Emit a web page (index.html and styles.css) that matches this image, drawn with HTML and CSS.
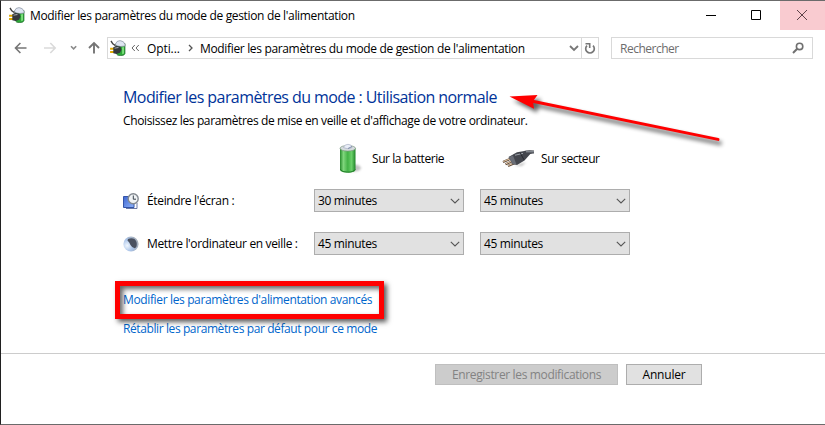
FILE: index.html
```
<!doctype html>
<html lang="fr">
<head>
    <meta charset="UTF-8">
    <meta name="viewport" content="width=device-width, initial-scale=1.0">
    <title>Modifier les paramètres du mode de gestion de l'alimentation</title>
    <link rel="stylesheet" href="styles.css">
</head>
<body>

<svg class="defs" width="0" height="0">
    <defs>
        <linearGradient id="green" x1="0" x2="1">
            <stop offset="0" stop-color="#278b2c"/>
            <stop offset=".22" stop-color="#80d67d"/>
            <stop offset=".5" stop-color="#43b246"/>
            <stop offset=".75" stop-color="#6bd06a"/>
            <stop offset="1" stop-color="#1d8427"/>
        </linearGradient>
        <linearGradient id="screen" x1="0" x2="1" y1="0" y2="1">
            <stop offset="0" stop-color="#3d65d0"/>
            <stop offset="1" stop-color="#8fb4fa"/>
        </linearGradient>
        <radialGradient id="moon" cx=".25" cy=".6" r=".8">
            <stop offset="0" stop-color="#f0f7ff"/>
            <stop offset=".5" stop-color="#a9c3e8"/>
            <stop offset="1" stop-color="#a3a8ae"/>
        </radialGradient>
        <filter id="soft" x="-50%" y="-50%" width="200%" height="200%">
            <feGaussianBlur stdDeviation="1.3"/>
        </filter>
        <filter id="shade" x="-20%" y="-50%" width="140%" height="200%">
            <feGaussianBlur stdDeviation="2.2"/>
        </filter>
        <symbol id="power" viewBox="0 0 16 16">
            <path d="M6 3.5 H15 V13.5 Q14.5 15.7 10.5 15.7 Q7 15.5 6.5 14Z" fill="#2ca737" stroke="#2c6e38" stroke-width=".7"/>
            <path d="M5.5 4 Q6.5 .6 10 .6 Q14 .8 15 4.500 V6 Q10 7.300 6 5.500Z" fill="#dfe5f2" stroke="#7b8492" stroke-width=".6"/>
            <path d="M12 7.500 L14 7 V13.500 L12.200 14.200Z" fill="#7be07b"/>
            <path d="M1 1 L2.800 3.800 L5.500 5.600" fill="none" stroke="#444" stroke-width="1.4"/>
            <path d="M.1 8.700 H4 M.1 12 H4" stroke="#dda800" stroke-width="1.9"/>
            <path d="M3.300 7.300 L6.500 5.800 L10.500 6.800 L11.500 9.800 L10 12.700 L6.500 14 L3.300 13.200Z" fill="#34383b"/>
            <path d="M4.500 8.200 L8.500 7.400" stroke="#999da1" stroke-width="1.1"/>
        </symbol>
        <symbol id="chevron" viewBox="0 0 10 6">
            <path d="M.8 .8 L5 5 L9.2 .8" fill="none" stroke="#555" stroke-width="1.1"/>
        </symbol>
    </defs>
</svg>

<div class="window">
    <div class="titlebar">
        <svg class="app-icon" width="16" height="16"><use href="#power"/></svg>
        <div class="title">Modifier les paramètres du mode de gestion de l'alimentation</div>
        <svg class="control" width="45" height="29" viewBox="0 0 45 29">
            <path d="M16 14.5 H26" stroke="#000"/>
        </svg>
        <svg class="control" width="45" height="29" viewBox="0 0 45 29">
            <path d="M16.5 9.5 H25.5 V18.5 H16.5Z" fill="none" stroke="#000"/>
        </svg>
        <svg class="control close" width="45" height="29" viewBox="0 0 45 29">
            <path d="M17 9 L27 19 M27 9 L17 19" stroke="#5d4348"/>
        </svg>
    </div>

    <div class="navbar">
        <svg class="arrows" width="106" height="22" viewBox="0 0 106 22">
            <g fill="none" stroke="#757575" stroke-width="1.6">
                <path d="M25.5 11 H14.6 M19.4 6 L14.5 11 L19.4 16"/>
                <path d="M43 11 H54 M49.3 6 L54.2 11 L49.3 16" stroke="#dadada"/>
                <path d="M70 9.2 L72.6 11.8 L75.2 9.2" stroke="#8a8a8a"/>
                <path d="M93 16.5 V6.2 M88 11 L93 6 L98 11" stroke-width="1.9"/>
            </g>
        </svg>
        <div class="address">
            <svg class="address-icon" width="16" height="16"><use href="#power"/></svg>
            <svg class="back" width="9" height="8" viewBox="0 0 9 8">
                <path d="M3.8 1 L1 4 L3.8 7 M7.8 1 L5 4 L7.8 7" fill="none" stroke="#666"/>
            </svg>
            <div class="crumb crumb-short">Opti...</div>
            <svg class="sep" width="5" height="8" viewBox="0 0 5 8">
                <path d="M1 1 L4 4 L1 7" fill="none" stroke="#555" stroke-width="1.3"/>
            </svg>
            <div class="crumb crumb-long">Modifier les paramètres du mode de gestion de l'alimentation</div>
            <svg class="drop" width="10" height="7" viewBox="0 0 10 7">
                <path d="M1 1 L5 5 L9 1" fill="none" stroke="#777" stroke-width="1.8"/>
            </svg>
            <div class="refresh">
                <svg width="12" height="13" viewBox="0 0 12 13">
                    <path d="M3 3.6 A4.3 4.3 0 1 0 9 3.600" fill="none" stroke="#777" stroke-width="1.7"/>
                    <path d="M1.500 1.800 H5.7 V6" fill="none" stroke="#777" stroke-width="1.6"/>
                </svg>
            </div>
        </div>
        <div class="search">
            <div class="placeholder">Rechercher</div>
            <svg width="12" height="12" viewBox="0 0 12 12">
                <circle cx="7.6" cy="4.4" r="3.2" fill="none" stroke="#707070" stroke-width="1.6"/>
                <path d="M5.2 6.8 L1 11" stroke="#707070" stroke-width="2"/>
            </svg>
        </div>
    </div>

    <div class="content">
        <h1>Modifier les paramètres du mode : Utilisation normale</h1>
        <p class="intro">Choisissez les paramètres de mise en veille et d'affichage de votre ordinateur.</p>

        <div class="settings">
            <div class="source source-battery">
                <svg width="32" height="32" viewBox="0 0 32 32">
                    <ellipse cx="20" cy="26" rx="7" ry="3.5" fill="#999" opacity=".6" filter="url(#soft)"/>
                    <path d="M6 6 V28 Q7 30.6 13.5 30.6 Q20.5 30.6 21.5 28 V6Z" fill="url(#green)"/>
                    <path d="M6.3 27.5 Q8 30.2 13.5 30.2 Q19.5 30.2 21.2 27.5" fill="none" stroke="#1d7a26"/>
                    <ellipse cx="13.75" cy="6.3" rx="7.75" ry="2.8" fill="#d5dbdd" stroke="#7f9684" stroke-width=".7"/>
                    <path d="M9.5 5.5 Q10.5 2.3 14 2.3 Q17.8 2.3 18 5.5 Q15 7.8 9.5 5.5Z" fill="#e9edf7" stroke="#a0a8bd" stroke-width=".6"/>
                    <path d="M14 6.5 L18 4.5" stroke="#7e8aa8"/>
                </svg>
                <span>Sur la batterie</span>
            </div>
            <div class="source source-mains">
                <svg width="32" height="32" viewBox="0 0 32 32">
                    <path d="M12 24 L24 20 L20 24Z" fill="#999" opacity=".6" filter="url(#soft)"/>
                    <path d="M1 20 L9 16.6 M3.5 22.3 L10.5 19 M6 24 L13 21" stroke="#5e4a3c" stroke-width="2.2"/>
                    <path d="M1.3 19.6 L8 16.800 M3.7 21.900 L10 19 M6.200 23.600 L12 21" stroke="#e6c9a5" stroke-width="1"/>
                    <path d="M6.5 15 L15 10.2 L21 9.2 Q26 7.5 32 8.6 V11.6 Q28 11.200 26.500 14 L22.500 18.500 L15 23 L10.5 22Z" fill="#44474e"/>
                    <path d="M6.8 15 L10.7 21.9 L14.5 22.6 L11 13.5Z" fill="#696d76"/>
                    <path d="M13 13.200 L21 11.400 M24 9.800 L32 9.800" stroke="#9ca1a9"/>
                    <path d="M18 10.5 L22 17.8" stroke="#202228" stroke-width=".8"/>
                </svg>
                <span>Sur secteur</span>
            </div>

            <div class="label label-screen">
                <svg width="16" height="16" viewBox="0 0 16 16">
                    <path d="M.5 3.5 H11 V14.5 H.5Z" fill="url(#screen)" stroke="#3454a8"/>
                    <path d="M3 15.500 H14 V10" fill="none" stroke="#596a9b" stroke-width=".9"/>
                    <circle cx="10.2" cy="5.8" r="5" fill="#f0f3f5" stroke="#838990" stroke-width="1.4"/>
                    <path d="M10.3 2.5 V6.2 H13" fill="none" stroke="#38424c"/>
                </svg>
                <span>Éteindre l'écran :</span>
            </div>
            <div class="select">30 minutes<svg width="10" height="6"><use href="#chevron"/></svg></div>
            <div class="select">45 minutes<svg width="10" height="6"><use href="#chevron"/></svg></div>

            <div class="label label-sleep">
                <svg width="16" height="16" viewBox="0 0 16 16">
                    <circle cx="8" cy="8" r="7.6" fill="url(#moon)"/>
                    <path d="M5 3 Q8.5 1.500 11.5 3 Q14.5 5.500 13.6 10.300 Q13 12 11.7 12.300 Q9 11.800 7.5 9 Q6.500 6 4.500 4.500Z" fill="#4a5160"/>
                </svg>
                <span>Mettre l'ordinateur en veille :</span>
            </div>
            <div class="select">45 minutes<svg width="10" height="6"><use href="#chevron"/></svg></div>
            <div class="select">45 minutes<svg width="10" height="6"><use href="#chevron"/></svg></div>
        </div>

        <div class="links">
            <a class="link-advanced">Modifier les paramètres d'alimentation avancés<i class="highlight"></i></a>
            <a class="link-reset">Rétablir les paramètres par défaut pour ce mode</a>
        </div>
    </div>

    <div class="footer">
        <div class="btn btn-disabled">Enregistrer les modifications</div>
        <div class="btn btn-cancel">Annuler</div>
    </div>

    <svg class="pointer" width="230" height="75" viewBox="0 0 230 75">
        <g opacity=".6" filter="url(#shade)" transform="translate(3 4)">
            <path d="M30 15.5 L218.5 54.5" stroke="#000" stroke-width="3.5"/>
            <path d="M10 11.5 L37.5 10 L34 23.5Z" fill="#000"/>
        </g>
        <path d="M30 15.8 L218 54.4" stroke="#f00" stroke-width="3" stroke-linecap="round"/>
        <path d="M9.5 11.5 L37.5 10 L33 16.3 L34 23.7Z" fill="#f00"/>
    </svg>
</div>

</body>
</html>
```
FILE: styles.css
```
*{
    padding: 0;
    margin: 0;
    box-sizing: border-box;
}

body{
    font-family: 'Open Sans', 'Noto Sans', sans-serif;
    font-size: 12px;
    color: #000;
    background: #fff;
    overflow: hidden;
}
svg{
    display: block;
    flex: none;
}
.defs{
    position: absolute;
}
.window{
    position: relative;
    display: flex;
    flex-direction: column;
    width: 825px;
    height: 425px;
    border: 1px solid #6b6b6b;
    border-left-color: #202020;
    border-right: 0;
    white-space: nowrap;
    letter-spacing: -0.35px;
}

/* title bar */
.titlebar{
    display: flex;
    height: 29px;
}
.app-icon{
    margin: 6px 5px 0 8px;
}
.title{
    flex: 1;
    line-height: 29px;
    letter-spacing: -0.34px;
}
.close{
    background: #f9cbd0;
}

/* navigation bar */
.navbar{
    display: flex;
    height: 36px;
    padding-top: 7px;
}
.address, .search{
    display: flex;
    align-items: center;
    height: 22px;
    border: 1px solid #d9d9d9;
}
.address{
    width: 492px;
    margin-right: 12px;
}
.address-icon{
    margin-left: 2px;
}
.back{
    margin-left: 5px;
}
.crumb-short{
    width: 33px;
    margin-left: 7px;
    letter-spacing: -0.1px;
}
.sep{
    margin-left: 8px;
}
.crumb-long{
    flex: 1;
    margin-left: 7px;
    letter-spacing: -0.34px;
}
.drop{
    margin-right: 2px;
}
.refresh{
    display: flex;
    align-items: center;
    justify-content: center;
    width: 17px;
    height: 20px;
    border-left: 1px solid #d9d9d9;
}
.search{
    width: 202px;
    justify-content: space-between;
    padding: 0 8px;
    color: #6d6d6d;
}
.placeholder{
    letter-spacing: -0.5px;
}

/* settings */
.content{
    height: 287px;
    padding: 20px 0 0 122px;
}
h1{
    font-size: 16px;
    font-weight: 400;
    line-height: 22px;
    letter-spacing: -0.57px;
    color: #039;
}
.intro{
    margin-top: 5px;
    line-height: 16px;
    letter-spacing: -0.37px;
}
.settings{
    display: grid;
    grid-template-columns: 175px 150px 150px;
    grid-template-rows: 27px 23px 23px;
    gap: 20px 16px;
    margin-top: 13px;
}
.source{
    display: flex;
    align-items: center;
    height: 32px;
    gap: 7px;
    letter-spacing: -0.45px;
}
.source-battery{
    grid-column: 2;
    gap: 6px;
    padding-left: 20px;
}
.source-mains{
    grid-column: 3;
    padding-left: 22px;
}
.label{
    display: flex;
    align-items: center;
    gap: 8px;
}
.select{
    display: flex;
    align-items: center;
    justify-content: space-between;
    padding: 0 3px;
    border: 1px solid #adadad;
    background: #e1e1e1;
}
.links{
    display: flex;
    flex-direction: column;
    align-items: flex-start;
    gap: 13px;
    margin-top: 37px;
    line-height: 16px;
    color: #0066cc;
}
.link-advanced{
    position: relative;
    letter-spacing: -0.36px;
}
.link-reset{
    letter-spacing: -0.4px;
}
.highlight{
    position: absolute;
    left: -8px;
    top: -11px;
    width: 269px;
    height: 38px;
    border: 5px solid #f00;
    box-shadow: 3px 3px 5px rgba(0,0,0,.65), inset 3px 3px 5px rgba(0,0,0,.6);
}

/* footer */
.footer{
    display: flex;
    gap: 8px;
    padding: 10px 0 0 434px;
    border-top: 1px solid #ccc;
}
.btn{
    display: flex;
    align-items: center;
    justify-content: center;
    height: 21px;
    border: 1px solid #adadad;
    background: #e1e1e1;
}
.btn-disabled{
    width: 183px;
    color: #838383;
    border-color: #bfbfbf;
    background: #ccc;
}
.btn-cancel{
    width: 76px;
    letter-spacing: -0.2px;
}

.pointer{
    position: absolute;
    left: 499px;
    top: 84px;
}
```
